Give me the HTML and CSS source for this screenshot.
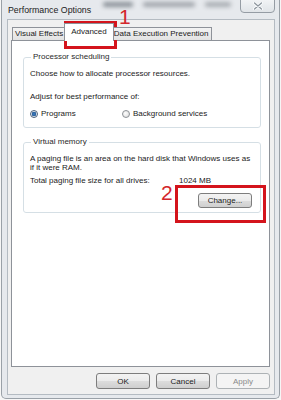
FILE: index.html
```html
<!DOCTYPE html>
<html lang="en">
<head>
  <meta charset="UTF-8">
  <meta name="viewport" content="width=device-width, initial-scale=1.0">
  <title>Performance Options</title>
  <link rel="stylesheet" href="styles.css">
</head>
<body>
  <div class="window">
    <div class="titlebar">
      <span class="title">Performance Options</span>
      <!-- blurred window behind the glass frame -->
      <div class="ghost">
        <span class="smudge smudge-a"></span>
        <span class="smudge smudge-b"></span>
        <span class="smudge smudge-c"></span>
      </div>
      <button class="close" aria-label="Close">
        <svg width="10" height="8" viewBox="0 0 10 8">
          <path d="M1.5 1 L8.5 7 M8.5 1 L1.5 7" stroke="#f7f9fb" stroke-width="3" stroke-linecap="round"/>
          <path d="M1.5 1 L8.5 7 M8.5 1 L1.5 7" stroke="#8c949c" stroke-width="1.2" stroke-linecap="round"/>
        </svg>
      </button>
    </div>

    <div class="client">
      <div class="tabs">
        <div class="tab">Visual Effects</div>
        <div class="tab active">Advanced</div>
        <div class="tab">Data Execution Prevention</div>
      </div>

      <div class="panel">
        <fieldset class="group group-cpu">
          <legend>Processor scheduling</legend>
          <p class="line">Choose how to allocate processor resources.</p>
          <p class="line line-adjust">Adjust for best performance of:</p>
          <div class="radios">
            <label class="radio radio-first"><span class="dot checked"></span>Programs</label>
            <label class="radio"><span class="dot"></span>Background services</label>
          </div>
        </fieldset>

        <fieldset class="group group-memory">
          <legend>Virtual memory</legend>
          <p class="para">A paging file is an area on the hard disk that Windows uses as if it were RAM.</p>
          <div class="total">
            <span class="total-label">Total paging file size for all drives:</span>
            <span>1024 MB</span>
          </div>
          <div class="change-row">
            <button class="btn">Change...</button>
          </div>
        </fieldset>
      </div>

      <div class="actions">
        <button class="btn">OK</button>
        <button class="btn">Cancel</button>
        <button class="btn" disabled>Apply</button>
      </div>
    </div>

    <!-- annotations drawn over the dialog -->
    <div class="mark mark-box-1"></div>
    <div class="mark-num mark-num-1">1</div>
    <div class="mark mark-box-2"></div>
    <div class="mark-num mark-num-2">2</div>
  </div>
</body>
</html>
```

FILE: styles.css
```css
body {
  margin: 0;
  background: #f6f6f6;
  font-family: 'Liberation Sans', Arial, sans-serif;
  font-size: 8px;
  color: #1b1b1b;
}

.window {
  position: relative;
  box-sizing: border-box;
  width: 279px;
  height: 399px;
  margin-left: 1px;
  padding: 0 4px 4px 5px;
  background: #e6e9ed;
  border: 1px solid #9aa1a8;
  border-top: none;
  border-radius: 0 0 5px 5px;
  overflow: hidden;
}

/* title bar */
.titlebar {
  display: flex;
  align-items: flex-start;
  height: 19px;
}

.title {
  font-size: 8.8px;
  line-height: 10px;
  margin: 5px 0 0 1px;
  color: #222;
}

.ghost {
  flex: 1;
  display: flex;
  gap: 10px;
  height: 8px;
  margin: 1px 0 0 12px;
  filter: blur(2px);
}

.smudge {
  height: 5px;
  margin-top: 1px;
  background: #8c9299;
  border-radius: 2px;
}

.smudge-a {
  width: 30px;
}

.smudge-b {
  width: 52px;
  background: #a1a6ac;
}

.smudge-c {
  width: 26px;
  background: #a9aeb3;
}

.close {
  display: flex;
  align-items: center;
  justify-content: center;
  width: 35px;
  height: 14px;
  margin: -1px 0 0 4px;
  padding: 0;
  border: 1px solid #959ca4;
  border-radius: 0 0 4px 4px;
  background: linear-gradient(#f1f3f5, #e0e4e8);
}

/* dialog client area */
.client {
  display: flex;
  flex-direction: column;
  box-sizing: border-box;
  width: 268px;
  height: 376px;
  background: #f0f0f0;
  border: 1px solid #b4bbc2;
}

.tabs {
  display: flex;
  align-items: flex-end;
  height: 20px;
  padding-left: 4px;
  position: relative;
  z-index: 1;
}

.tab {
  height: 12px;
  padding: 0 2px;
  line-height: 12px;
  border: 1px solid #8e9299;
  border-bottom: none;
  background: linear-gradient(#f3f3f3, #e2e2e2);
  white-space: nowrap;
}

.tab + .tab {
  margin-left: -1px;
}

.tab.active {
  height: 17px;
  line-height: 15px;
  margin: 0 -2px 0 -2px;
  padding: 0 6px;
  background: #fff;
  position: relative;
  top: 1px;
  z-index: 1;
}

.panel {
  box-sizing: border-box;
  height: 327px;
  margin: 0 4px 0 3px;
  padding: 0 8px 0 11px;
  background: #fff;
  border: 1px solid #8e9299;
}

/* group boxes */
.group {
  margin: 11px 0 0 0;
  padding: 0 6px 0 6px;
  border: 1px solid #d5dfe5;
  border-radius: 3px;
}

.group legend {
  padding: 0 2px;
  margin-left: 1px;
  line-height: 10px;
  color: #2a2a2a;
}

.line {
  margin: 7px 0 0 0;
  line-height: 10px;
}

.line-adjust {
  margin-top: 13px;
}

.radios {
  display: flex;
  margin-top: 7px;
  padding-bottom: 8px;
  line-height: 10px;
}

.radio {
  display: flex;
  align-items: center;
}

.radio-first {
  width: 92px;
}

.dot {
  box-sizing: border-box;
  width: 8px;
  height: 8px;
  margin-right: 3px;
  border: 1px solid #8d9196;
  border-radius: 50%;
  background: radial-gradient(circle at 40% 40%, #fdfdfd, #d8d8d8);
}

.dot.checked {
  border-color: #4c607a;
  background: radial-gradient(circle, #3c7fc4 0, #2b5f99 2px, #e9f0f7 2.6px, #dfe6ee 100%);
}

.group-memory {
  margin-top: 9px;
}

.para {
  margin: 7px 0 0 0;
  padding-right: 1px;
  line-height: 9px;
}

.total {
  display: flex;
  margin-top: 4px;
  line-height: 10px;
}

.total-label {
  width: 149px;
}

.change-row {
  display: flex;
  justify-content: flex-end;
  margin-top: 7px;
  padding: 0 2px 4px 0;
}

/* push buttons */
.btn {
  box-sizing: border-box;
  width: 54px;
  height: 15px;
  padding: 0;
  font-family: inherit;
  font-size: 8px;
  color: #1b1b1b;
  border: 1px solid #7d7d7d;
  border-radius: 3px;
  background: linear-gradient(#f3f3f3 0%, #ebebeb 50%, #dddddd 51%, #cfcfcf 100%);
}

.btn:disabled {
  color: #8a8a8a;
  border-color: #adb2b5;
  background: #f4f4f4;
}

.actions {
  display: flex;
  justify-content: flex-end;
  gap: 6px;
  margin: 6px 4px 0 0;
}

.actions .btn {
  height: 16px;
}

/* red annotations */
.mark {
  position: absolute;
  box-sizing: border-box;
  border: 3px solid #d4141c;
}

.mark-box-1 {
  left: 62px;
  top: 21px;
  width: 53px;
  height: 28px;
}

.mark-box-2 {
  left: 173px;
  top: 185px;
  width: 91px;
  height: 38px;
}

.mark-num {
  position: absolute;
  font-size: 21px;
  line-height: 21px;
  color: #d3262b;
}

.mark-num-1 {
  left: 117px;
  top: 6px;
}

.mark-num-2 {
  left: 159px;
  top: 182px;
}
```
